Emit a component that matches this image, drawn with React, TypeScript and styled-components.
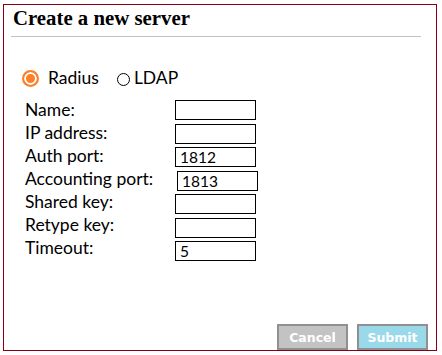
import React from "react";
import styled, { createGlobalStyle } from "styled-components";

const Global = createGlobalStyle`
  html, body { margin: 0; padding: 0; background: #fff; }
  body { font-family: "Lato", "Noto Sans", sans-serif; color: #000; }
  * { box-sizing: border-box; }
`;

const Frame = styled.div`
  margin: 4px 0 0 3px;
  width: 434px;
  height: 347px;
  border: 1px solid #880015;
  display: flex;
  flex-direction: column;
`;

const Header = styled.div`
  margin: 0 15px 0 7px;
  padding: 1px 0 6px 2px;
  border-bottom: 1px solid #c3c3c3;
`;

const Title = styled.h1`
  margin: 0;
  font-family: "Liberation Serif", "Times New Roman", serif;
  font-weight: bold;
  font-size: 20.8px;
  line-height: 24px;
`;

const RadioRow = styled.div`
  margin-top: 30px;
  padding-left: 18px;
  display: flex;
  align-items: center;
  height: 22px;
  font-size: 17.5px;
  line-height: 22px;
`;

const RadioOption = styled.label<{ $gap?: number }>`
  display: flex;
  align-items: center;
  margin-right: ${(p) => p.$gap ?? 0}px;
`;

const Dot = styled.span<{ $checked?: boolean }>`
  display: inline-block;
  border-radius: 50%;
  ${(p) =>
    p.$checked
      ? `
    width: 17px; height: 17px;
    border: 2.5px solid #ff7f27;
    background: #ff7f27;
    box-shadow: inset 0 0 0 2px #fff;
    margin-right: 9px;
  `
      : `
    width: 13px; height: 13px;
    border: 1.5px solid #000;
    background: #fff;
    margin-top: 3px;
    margin-right: 4px;
  `}
`;

const Form = styled.div`
  margin-top: 9px;
  padding-left: 21px;
  display: flex;
`;

const Labels = styled.div`
  width: 150px;
  display: flex;
  flex-direction: column;
  font-size: 17.5px;
  line-height: 23px;
`;

const Fields = styled.div`
  margin-top: 2px;
  display: flex;
  flex-direction: column;
  gap: 3.5px;
`;

const Input = styled.div<{ $shift?: number }>`
  width: 81px;
  height: 20px;
  margin-left: ${(p) => p.$shift ?? 0}px;
  border: 1px solid #000;
  padding-left: 4px;
  font-size: 15.5px;
  line-height: 18px;
  display: flex;
  align-items: center;
`;

const Actions = styled.div`
  margin-top: auto;
  display: flex;
  justify-content: flex-end;
  gap: 9px;
  padding: 0 8px 0 0;
`;

const Button = styled.button<{ $primary?: boolean }>`
  width: 71px;
  height: 26px;
  border: 2px solid #909090;
  background: ${(p) => (p.$primary ? "#99d9ea" : "#c3c3c3")};
  color: #fff;
  font-family: "DejaVu Sans", Verdana, sans-serif;
  font-weight: bold;
  font-size: 12.5px;
  padding: 0;
`;

const rows = [
  { label: "Name:", value: "" },
  { label: "IP address:", value: "" },
  { label: "Auth port:", value: "1812" },
  { label: "Accounting port:", value: "1813", shift: 2 },
  { label: "Shared key:", value: "" },
  { label: "Retype key:", value: "" },
  { label: "Timeout:", value: "5" },
];

export default function App() {
  return (
    <>
      <Global />
      <Frame>
        <Header>
          <Title>Create a new server</Title>
        </Header>
        <RadioRow>
          <RadioOption $gap={18}>
            <Dot $checked />
            Radius
          </RadioOption>
          <RadioOption>
            <Dot />
            LDAP
          </RadioOption>
        </RadioRow>
        <Form>
          <Labels>
            {rows.map((r) => (
              <span key={r.label}>{r.label}</span>
            ))}
          </Labels>
          <Fields>
            {rows.map((r) => (
              <Input key={r.label} $shift={r.shift}>
                {r.value}
              </Input>
            ))}
          </Fields>
        </Form>
        <Actions>
          <Button>Cancel</Button>
          <Button $primary>Submit</Button>
        </Actions>
      </Frame>
    </>
  );
}
